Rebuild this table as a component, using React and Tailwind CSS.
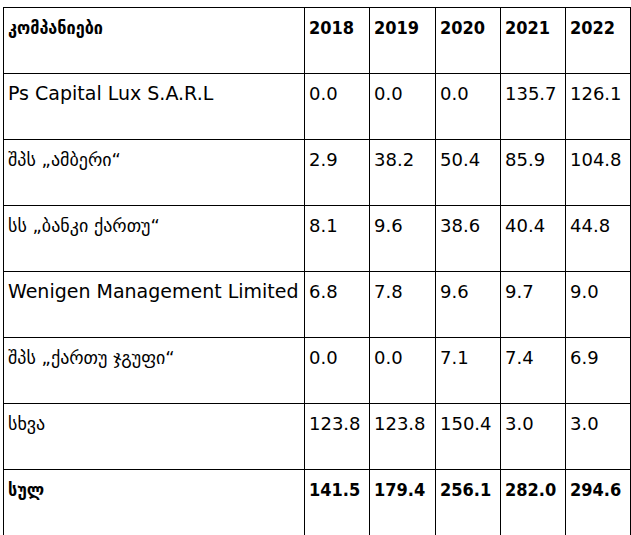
import React from "react";

const rows = [
  { name: "Ps Capital Lux S.A.R.L", latin: true, vals: ["0.0", "0.0", "0.0", "135.7", "126.1"] },
  { name: "შპს „ამბერი“", vals: ["2.9", "38.2", "50.4", "85.9", "104.8"] },
  { name: "სს „ბანკი ქართუ“", vals: ["8.1", "9.6", "38.6", "40.4", "44.8"] },
  { name: "Wenigen Management Limited", latin: true, vals: ["6.8", "7.8", "9.6", "9.7", "9.0"] },
  { name: "შპს „ქართუ ჯგუფი“", vals: ["0.0", "0.0", "7.1", "7.4", "6.9"] },
  { name: "სხვა", vals: ["123.8", "123.8", "150.4", "3.0", "3.0"] },
];

const years = ["2018", "2019", "2020", "2021", "2022"];
const total = ["141.5", "179.4", "256.1", "282.0", "294.6"];

function Cell({ children, bold, big }) {
  return (
    <div
      className={
        "h-[66px] border-r border-b border-black pl-[4px] pt-[9px] leading-[21px] whitespace-nowrap overflow-hidden " +
        (big ? "text-[19px] " : "text-[18px] ") +
        (bold
          ? "font-bold font-['DejaVu_Sans_Condensed','DejaVu_Sans',sans-serif]"
          : "font-['DejaVu_Sans',sans-serif]")
      }
    >
      {children}
    </div>
  );
}

export default function App() {
  return (
    <div className="bg-white w-[631px] h-[535px] overflow-hidden pl-[3px] pt-[7px] text-black">
      <div className="grid grid-cols-[301px_65px_66px_65px_65px_65px] border-l border-t border-black w-[628px]">
        <Cell bold>კომპანიები</Cell>
        {years.map((y) => (
          <Cell key={y} bold>{y}</Cell>
        ))}
        {rows.map((r) => (
          <React.Fragment key={r.name}>
            <Cell big={r.latin}>{r.name}</Cell>
            {r.vals.map((v, i) => (
              <Cell key={i}>{v}</Cell>
            ))}
          </React.Fragment>
        ))}
        <Cell bold>სულ</Cell>
        {total.map((v, i) => (
          <Cell key={i} bold>{v}</Cell>
        ))}
      </div>
    </div>
  );
}
